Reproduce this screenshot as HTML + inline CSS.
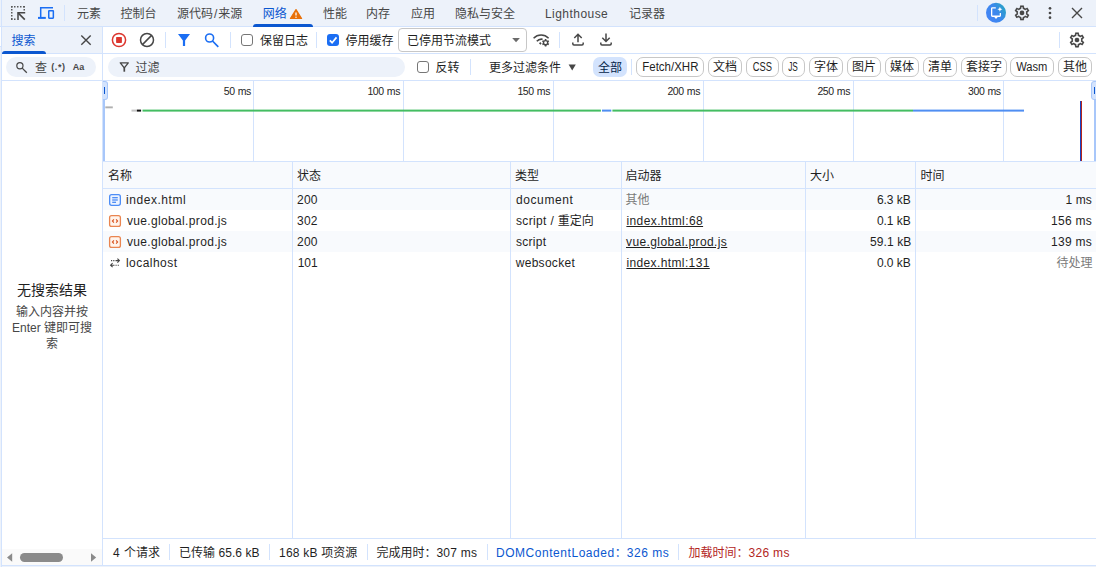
<!DOCTYPE html>
<html lang="zh-CN">
<head>
<meta charset="utf-8">
<title>DevTools - 网络</title>
<style>
html,body{margin:0;padding:0;}
body{width:1096px;height:567px;overflow:hidden;background:#fff;position:relative;
 font-family:"Liberation Sans","Noto Sans CJK SC",sans-serif;font-size:12px;color:#1f1f1f;line-height:16px;}
.a{position:absolute;}
.t{position:absolute;white-space:nowrap;line-height:16px;font-size:12px;margin-top:1px;}
.rw{margin-top:0;}
.hl{position:absolute;height:1px;background:#d3e3fd;}
.vl{position:absolute;width:1px;background:#d3e3fd;}
.bar{position:absolute;background:#edf2fa;}
.pill{position:absolute;top:57px;height:18px;border:1px solid #c7c7c7;border-radius:7px;text-align:center;line-height:18px;font-size:12px;color:#1f1f1f;white-space:nowrap;}
.cb{position:absolute;width:10px;height:10px;border:1px solid #767676;border-radius:3px;background:#fff;}
svg{position:absolute;overflow:visible;}
</style>
</head>
<body>
<!-- top tab bar -->
<div class="bar" style="left:0;top:0;width:1096px;height:26px;"></div>
<div class="hl" style="left:0;top:26px;width:1096px;"></div>
<div class="a" style="left:253px;top:24px;width:60px;height:3px;background:#0b57d0;border-radius:3px 3px 0 0;"></div>
<div class="vl" style="left:64px;top:5px;height:16px;"></div>
<div class="vl" style="left:977px;top:5px;height:16px;"></div>
<!-- left search panel -->
<div class="bar" style="left:0;top:27px;width:102px;height:26px;"></div>
<div class="hl" style="left:0;top:53px;width:1096px;"></div>
<div class="hl" style="left:0;top:80px;width:1096px;"></div>
<div class="a" style="left:2px;top:51px;width:44px;height:3px;background:#0b57d0;border-radius:3px 3px 0 0;"></div>
<div class="a" style="left:6px;top:57px;width:90px;height:20px;border-radius:10px;background:#edf2fa;"></div>
<div class="t" style="left:2px;top:280px;width:100px;text-align:center;font-size:14px;line-height:18px;">无搜索结果</div>
<div class="t" style="left:8px;top:303px;width:88px;text-align:center;white-space:normal;color:#474747;">输入内容并按 Enter 键即可搜索</div>
<div class="a" style="left:2px;top:549px;width:100px;height:16px;background:#fafafa;"></div>
<div class="a" style="left:20px;top:553px;width:43px;height:9px;border-radius:4.5px;background:#8b8b8b;"></div>
<!-- toolbar -->
<div class="vl" style="left:165px;top:32px;height:16px;"></div>
<div class="vl" style="left:230px;top:32px;height:16px;"></div>
<div class="vl" style="left:316px;top:32px;height:16px;"></div>
<div class="vl" style="left:559px;top:32px;height:16px;"></div>
<div class="vl" style="left:1059px;top:32px;height:16px;"></div>
<div class="cb" style="left:241px;top:34px;"></div>
<div class="a" style="left:327px;top:34px;width:12px;height:12px;border-radius:3px;background:#1b6ef3;"></div>
<div class="a" style="left:398px;top:28px;width:127px;height:22px;border:1px solid #c7c7c7;border-radius:4px;background:#fff;"></div>
<!-- filter bar -->
<div class="a" style="left:108px;top:57px;width:297px;height:20px;border-radius:10px;background:#edf2fa;"></div>
<div class="cb" style="left:417px;top:61px;"></div>
<div class="vl" style="left:470px;top:59px;height:16px;"></div>
<div class="a" style="left:593px;top:57px;width:34px;height:20px;border-radius:7px;background:#d3e3fd;"></div>
<div class="t" style="left:598px;top:59px;width:24px;text-align:center;color:#041e49;">全部</div>
<div class="vl" style="left:631px;top:59px;height:16px;"></div>
<div class="pill" style="left:636px;width:66px;"><span style="display:inline-block;transform:scaleX(0.957);transform-origin:50% 50%;margin:0 -10px;">Fetch/XHR</span></div>
<div class="pill" style="left:708px;width:32px;">文档</div>
<div class="pill" style="left:746px;width:31px;"><span style="display:inline-block;transform:scaleX(0.78);transform-origin:50% 50%;margin:0 -10px;">CSS</span></div>
<div class="pill" style="left:782px;width:21px;"><span style="display:inline-block;transform:scaleX(0.69);transform-origin:50% 50%;margin:0 -10px;">JS</span></div>
<div class="pill" style="left:809px;width:32px;">字体</div>
<div class="pill" style="left:847px;width:32px;">图片</div>
<div class="pill" style="left:885px;width:32px;">媒体</div>
<div class="pill" style="left:923px;width:32px;">清单</div>
<div class="pill" style="left:961px;width:44px;">套接字</div>
<div class="pill" style="left:1010px;width:42px;"><span style="display:inline-block;transform:scaleX(0.93);transform-origin:50% 50%;margin:0 -10px;">Wasm</span></div>
<div class="pill" style="left:1058px;width:32px;">其他</div>
<!-- overview -->
<div class="vl" style="left:253px;top:81px;height:80px;"></div>
<div class="vl" style="left:403px;top:81px;height:80px;"></div>
<div class="vl" style="left:553px;top:81px;height:80px;"></div>
<div class="vl" style="left:703px;top:81px;height:80px;"></div>
<div class="vl" style="left:853px;top:81px;height:80px;"></div>
<div class="vl" style="left:1003px;top:81px;height:80px;"></div>
<div class="a" style="left:1080px;top:101px;width:1px;height:60px;background:#1a44c2;"></div>
<div class="a" style="left:1081px;top:101px;width:1px;height:60px;background:#b3261e;"></div>
<div class="a" style="left:103px;top:81px;width:2px;height:80px;background:#a8c7fa;"></div>
<div class="a" style="left:103px;top:81px;width:4px;height:18px;background:#d3e3fd;border:1px solid #a8c7fa;border-left:0;border-radius:0 3px 3px 0;box-sizing:border-box;width:5px;height:19px;"></div>
<div class="a" style="left:104px;top:87px;width:1px;height:7px;background:#0b57d0;"></div>
<div class="a" style="left:1094px;top:81px;width:2px;height:80px;background:#a8c7fa;"></div>
<div class="a" style="left:1091px;top:81px;width:8px;height:19px;background:#d3e3fd;border:1px solid #a8c7fa;border-radius:3px;box-sizing:border-box;"></div>
<div class="a" style="left:1094px;top:87px;width:1px;height:7px;background:#0b57d0;"></div>
<!-- table -->
<div class="a" style="left:103px;top:162px;width:993px;height:26px;background:#f8fafd;"></div>
<div class="hl" style="left:103px;top:161px;width:993px;"></div>
<div class="hl" style="left:103px;top:188px;width:993px;"></div>
<div class="a" style="left:103px;top:189px;width:993px;height:21px;background:#f8fafd;"></div>
<div class="a" style="left:103px;top:231px;width:993px;height:21px;background:#f8fafd;"></div>
<div class="vl" style="left:292px;top:162px;height:376px;"></div>
<div class="vl" style="left:510px;top:162px;height:376px;"></div>
<div class="vl" style="left:621px;top:162px;height:376px;"></div>
<div class="vl" style="left:805px;top:162px;height:376px;"></div>
<div class="vl" style="left:915px;top:162px;height:376px;"></div>
<!-- status bar -->
<div class="hl" style="left:103px;top:538px;width:993px;"></div>
<div class="hl" style="left:0;top:565px;width:1096px;"></div>
<div class="vl" style="left:169px;top:544px;height:16px;"></div>
<div class="vl" style="left:269px;top:544px;height:16px;"></div>
<div class="vl" style="left:367px;top:544px;height:16px;"></div>
<div class="vl" style="left:487px;top:544px;height:16px;"></div>
<div class="vl" style="left:678px;top:544px;height:16px;"></div>
<div class="bar" style="left:0;top:0;width:1px;height:567px;"></div>
<div class="bar" style="left:0;top:566px;width:1096px;height:1px;"></div>
<div class="a" style="left:0;top:26px;width:1px;height:19px;background:#fff;border-top:1px solid #d3e3fd;border-bottom:1px solid #d3e3fd;"></div>
<div class="vl" style="left:1px;top:0;height:567px;"></div>
<div class="vl" style="left:102px;top:27px;height:539px;"></div>
<!-- text -->
<div id="tab1" class="t" style="left:77.00px;top:5px;color:#474747;">元素</div>
<div id="tab2" class="t" style="left:120.50px;top:5px;color:#474747;">控制台</div>
<div id="tab3" class="t" style="left:177.00px;top:5px;color:#474747;">源代码<span style="margin:0 0.9px">/</span>来源</div>
<div id="tab4" class="t" style="left:262.70px;top:5px;color:#0b57d0;">网络</div>
<div id="tab5" class="t" style="left:323.00px;top:5px;color:#474747;">性能</div>
<div id="tab6" class="t" style="left:366.00px;top:5px;color:#474747;">内存</div>
<div id="tab7" class="t" style="left:411.00px;top:5px;color:#474747;">应用</div>
<div id="tab8" class="t" style="left:455.00px;top:5px;color:#474747;">隐私与安全</div>
<div id="tab9" class="t" style="left:545.00px;top:5px;color:#474747;"><span style="letter-spacing:0.45px">Lighthouse</span></div>
<div id="tab10" class="t" style="left:629.00px;top:5px;color:#474747;">记录器</div>
<div id="srch" class="t" style="left:11.60px;top:32px;color:#0b57d0;">搜索</div>
<div id="cha" class="t" style="left:35.00px;top:59px;color:#474747;">查</div>
<div id="re" class="t" style="left:51.20px;top:58px;color:#474747;font-size:9px;font-weight:bold;"><span style="letter-spacing:0.60px">(.*)</span></div>
<div id="aa" class="t" style="left:72.80px;top:58px;color:#474747;font-size:9px;font-weight:bold;">Aa</div>
<div id="pl" class="t" style="left:260.00px;top:32px;">保留日志</div>
<div id="dc" class="t" style="left:345.40px;top:32px;">停用缓存</div>
<div id="thr" class="t" style="left:407.00px;top:32px;">已停用节流模式</div>
<div id="flt" class="t" style="left:135.60px;top:59px;color:#474747;">过滤</div>
<div id="inv" class="t" style="left:435.40px;top:59px;">反转</div>
<div id="more" class="t" style="left:489.00px;top:59px;">更多过滤条件</div>
<div id="ov0" class="t" style="left:223.70px;top:82px;font-size:10.5px;word-spacing:0.6px;"><span style="letter-spacing:-0.40px">50 ms</span></div>
<div id="ov1" class="t" style="left:367.40px;top:82px;font-size:10.5px;word-spacing:0.6px;"><span style="letter-spacing:-0.40px">100 ms</span></div>
<div id="ov2" class="t" style="left:517.40px;top:82px;font-size:10.5px;word-spacing:0.6px;"><span style="letter-spacing:-0.40px">150 ms</span></div>
<div id="ov3" class="t" style="left:667.40px;top:82px;font-size:10.5px;word-spacing:0.6px;"><span style="letter-spacing:-0.40px">200 ms</span></div>
<div id="ov4" class="t" style="left:817.40px;top:82px;font-size:10.5px;word-spacing:0.6px;"><span style="letter-spacing:-0.40px">250 ms</span></div>
<div id="ov5" class="t" style="left:968.00px;top:82px;font-size:10.5px;word-spacing:0.6px;"><span style="letter-spacing:-0.40px">300 ms</span></div>
<div id="h1" class="t" style="left:108.00px;top:167px;">名称</div>
<div id="h2" class="t" style="left:297.00px;top:167px;">状态</div>
<div id="h3" class="t" style="left:515.00px;top:167px;">类型</div>
<div id="h4" class="t" style="left:625.40px;top:167px;">启动器</div>
<div id="h5" class="t" style="left:810.00px;top:167px;">大小</div>
<div id="h6" class="t" style="left:920.40px;top:167px;">时间</div>
<div id="n1" class="t rw" style="left:126.00px;top:192px;"><span style="letter-spacing:0.55px">index.html</span></div>
<div id="n2" class="t rw" style="left:127.00px;top:213px;"><span style="letter-spacing:0.34px">vue.global.prod.js</span></div>
<div id="n3" class="t rw" style="left:127.00px;top:234px;"><span style="letter-spacing:0.34px">vue.global.prod.js</span></div>
<div id="n4" class="t rw" style="left:126.00px;top:255px;"><span style="letter-spacing:0.45px">localhost</span></div>
<div id="s1" class="t rw" style="left:297.00px;top:192px;"><span style="letter-spacing:0.23px">200</span></div>
<div id="s2" class="t rw" style="left:297.00px;top:213px;"><span style="letter-spacing:0.23px">302</span></div>
<div id="s3" class="t rw" style="left:297.00px;top:234px;"><span style="letter-spacing:0.23px">200</span></div>
<div id="s4" class="t rw" style="left:297.70px;top:255px;">101</div>
<div id="ty1" class="t rw" style="left:516.00px;top:192px;"><span style="letter-spacing:0.59px">document</span></div>
<div id="ty2" class="t rw" style="left:516.00px;top:213px;"><span style="letter-spacing:0.35px">script / </span>重定向</div>
<div id="ty3" class="t rw" style="left:516.00px;top:234px;"><span style="letter-spacing:0.29px">script</span></div>
<div id="ty4" class="t rw" style="left:515.70px;top:255px;"><span style="letter-spacing:0.30px">websocket</span></div>
<div id="i1" class="t rw" style="left:625.40px;top:192px;color:#7a7a7a;">其他</div>
<div id="i2" class="t rw" style="left:626.40px;top:213px;text-decoration:underline;"><span style="letter-spacing:0.41px">index.html:68</span></div>
<div id="i3" class="t rw" style="left:626.00px;top:234px;text-decoration:underline;"><span style="letter-spacing:0.40px">vue.global.prod.js</span></div>
<div id="i4" class="t rw" style="left:626.40px;top:255px;text-decoration:underline;"><span style="letter-spacing:0.38px">index.html:131</span></div>
<div id="z1" class="t rw" style="left:877.00px;top:192px;"><span style="letter-spacing:-0.07px">6.3 kB</span></div>
<div id="z2" class="t rw" style="left:877.00px;top:213px;"><span style="letter-spacing:-0.07px">0.1 kB</span></div>
<div id="z3" class="t rw" style="left:870.00px;top:234px;"><span style="letter-spacing:0.09px">59.1 kB</span></div>
<div id="z4" class="t rw" style="left:877.00px;top:255px;"><span style="letter-spacing:-0.07px">0.0 kB</span></div>
<div id="m1" class="t rw" style="left:1065.40px;top:192px;"><span style="letter-spacing:0.12px">1 ms</span></div>
<div id="m2" class="t rw" style="left:1051.00px;top:213px;"><span style="letter-spacing:0.27px">156 ms</span></div>
<div id="m3" class="t rw" style="left:1051.00px;top:234px;"><span style="letter-spacing:0.27px">139 ms</span></div>
<div id="m4" class="t rw" style="left:1056.40px;top:255px;color:#7a7a7a;">待处理</div>
<div id="st1" class="t" style="left:113.00px;top:544px;"><span style="letter-spacing:0.45px">4 </span>个请求</div>
<div id="st2" class="t" style="left:179.00px;top:544px;">已传输<span style="letter-spacing:0.06px"> 65.6 kB</span></div>
<div id="st3" class="t" style="left:279.00px;top:544px;"><span style="letter-spacing:0.23px">168 kB </span>项资源</div>
<div id="st4" class="t" style="left:376.40px;top:544px;">完成用时：<span style="letter-spacing:0.25px">307 ms</span></div>
<div id="st5" class="t" style="left:496.00px;top:544px;color:#0b57d0;"><span style="letter-spacing:0.54px">DOMContentLoaded</span>：<span style="letter-spacing:0.54px">326 ms</span></div>
<div id="st6" class="t" style="left:688.40px;top:544px;color:#b3261e;">加载时间：<span style="letter-spacing:0.34px">326 ms</span></div>
<!-- icon overlay -->
<svg style="left:0;top:0;pointer-events:none;" width="1096" height="567" viewBox="0 0 1096 567" fill="none">
<defs><linearGradient id="aig" x1="0" y1="0.8" x2="1" y2="0.2"><stop offset="0.15" stop-color="#4285f4"/><stop offset="0.55" stop-color="#3b88ec"/><stop offset="1" stop-color="#26a5c2"/></linearGradient></defs>
<rect x="105.3" y="106.4" width="7.5" height="1.9" fill="#b0b0b0"/>
<rect x="131.5" y="109.6" width="5.4" height="2" fill="#c4c4c4"/>
<rect x="136.9" y="109.6" width="4.2" height="2" fill="#111"/>
<rect x="142.5" y="109.6" width="458.4" height="2" fill="#44bd62"/>
<rect x="612.4" y="109.6" width="300.6" height="2" fill="#44bd62"/>
<rect x="602" y="109.6" width="9.3" height="2" fill="#4f8ef2"/>
<rect x="913" y="109.6" width="111" height="2" fill="#4f8ef2"/>
<g stroke="#5a5a5a" stroke-width="1.5">
<path d="M11 6.75H25" stroke-dasharray="1.5 1.5"/>
<path d="M11.75 6V20" stroke-dasharray="1.5 1.5"/>
<path d="M24.25 6V11" stroke-dasharray="1.5 1.5"/>
<path d="M11 19.25H16" stroke-dasharray="1.5 1.5"/>
</g>
<g stroke="#474747" stroke-width="1.5"><path d="M18 20V12.8H25.2"/><path d="M18.3 13.1L24.8 19.6" stroke-width="1.6"/></g>
<g stroke="#1b6ef3" stroke-width="1.5"><path d="M53 7.7H40.7V17"/><rect x="48.75" y="10.85" width="4.6" height="7.3" rx="0.4"/></g>
<rect x="38" y="16.9" width="7.8" height="2" fill="#1b6ef3"/>
<circle cx="119" cy="40" r="6.6" stroke="#dc362e" stroke-width="1.5"/>
<rect x="116.1" y="37.1" width="5.8" height="5.8" rx="0.6" fill="#dc362e"/>
<circle cx="147" cy="40" r="6.5" stroke="#474747" stroke-width="1.5"/>
<path d="M142.4 44.6L151.6 35.4" stroke="#474747" stroke-width="1.5"/>
<path d="M178 34H190L185.1 40.4V46H182.9V40.4Z" fill="#1b6ef3"/>
<circle cx="209.6" cy="38" r="4" stroke="#1b6ef3" stroke-width="1.6"/>
<path d="M212.5 41L218.3 46.8" stroke="#1b6ef3" stroke-width="1.7"/>
<path d="M329.8 40.3L332.1 42.7L336.5 37.4" stroke="#fff" stroke-width="1.7"/>
<path d="M512.2 38H519.9L516.05 42.3Z" fill="#6a6a6a"/>
<path d="M568.6 64.4H575.8L572.2 70.6Z" fill="#474747"/>
<g stroke="#474747" stroke-width="1.5">
<path d="M533.6 38.2A10.5 10.5 0 0 1 548.6 38.2"/>
<path d="M536.8 41.3A6.2 6.2 0 0 1 542.6 39.2" stroke-width="1.6"/>
<path d="M541 44.2L539.6 42.7" stroke-width="1.7"/>
<circle cx="545.6" cy="42.7" r="2.1" stroke-width="1.4"/>
<path d="M545.6 39V40.4M545.6 45V46.4M542.4 40.85L543.6 41.55M547.6 43.85L548.8 44.55M542.4 44.55L543.6 43.85M547.6 41.55L548.8 40.85" stroke-width="1.6"/>
</g>
<g stroke="#474747" stroke-width="1.5" stroke-linejoin="round">
<path d="M578 42.3V34.6M574.3 38L578 34.3L581.7 38" stroke-linejoin="miter"/>
<path d="M572.8 42.4V43.8Q572.8 45 574 45H582Q583.2 45 583.2 43.8V42.4"/>
<path d="M606 33.4V41.2M602.3 37.8L606 41.5L609.7 37.8" stroke-linejoin="miter"/>
<path d="M600.8 42.4V43.8Q600.8 45 602 45H610Q611.2 45 611.2 43.8V42.4"/>
</g>
<circle cx="996" cy="12.8" r="10" fill="url(#aig)"/>
<path d="M995.8 7.85H992.3Q991.65 7.85 991.65 8.5V15.6Q991.65 16.25 992.3 16.25H999.7Q1000.35 16.25 1000.35 15.6V13" stroke="#fff" stroke-width="1.3"/>
<path d="M994 16.8H998L996 18.9Z" fill="#fff"/>
<path d="M999.9 6.7L1000.6 8.5L1002.4 9.2L1000.6 9.9L999.9 11.7L999.2 9.9L997.4 9.2L999.2 8.5Z" fill="#fff"/>
<g transform="translate(1013.12,4.02) scale(0.74)" fill="#474747" stroke="#474747" stroke-width="0.15"><path d="M19.43 12.98c.04-.32.07-.64.07-.98 0-.34-.03-.66-.07-.98l2.11-1.65c.19-.15.24-.42.12-.64l-2-3.46c-.09-.16-.26-.25-.44-.25-.06 0-.12.01-.17.03l-2.49 1c-.52-.4-1.08-.73-1.69-.98l-.38-2.65C14.46 2.18 14.25 2 14 2h-4c-.25 0-.46.18-.49.42l-.38 2.65c-.61.25-1.17.59-1.69.98l-2.49-1c-.06-.02-.12-.03-.18-.03-.17 0-.34.09-.43.25l-2 3.46c-.13.22-.07.49.12.64l2.11 1.65c-.04.32-.07.65-.07.98 0 .33.03.66.07.98l-2.11 1.65c-.19.15-.24.42-.12.64l2 3.46c.09.16.26.25.44.25.06 0 .12-.01.17-.03l2.49-1c.52.4 1.08.73 1.69.98l.38 2.65c.03.24.24.42.49.42h4c.25 0 .46-.18.49-.42l.38-2.65c.61-.25 1.17-.59 1.69-.98l2.49 1c.06.02.12.03.18.03.17 0 .34-.09.43-.25l2-3.46c.12-.22.07-.49-.12-.64l-2.11-1.65zm-1.98-1.71c.04.31.05.52.05.73 0 .21-.02.43-.05.73l-.14 1.13.89.7 1.08.84-.7 1.21-1.27-.51-1.04-.42-.9.68c-.43.32-.84.56-1.25.73l-1.06.43-.16 1.13-.2 1.35h-1.4l-.19-1.35-.16-1.13-1.06-.43c-.43-.18-.83-.41-1.23-.71l-.91-.7-1.06.43-1.27.51-.7-1.21 1.08-.84.89-.7-.14-1.13c-.03-.31-.05-.54-.05-.74s.02-.43.05-.73l.14-1.13-.89-.7-1.08-.84.7-1.21 1.27.51 1.04.42.9-.68c.43-.32.84-.56 1.25-.73l1.06-.43.16-1.13.2-1.35h1.39l.19 1.35.16 1.13 1.06.43c.43.18.83.41 1.23.71l.91.7 1.06-.43 1.27-.51.7 1.21-1.07.85-.89.7.14 1.13z"/><circle cx="12" cy="12" r="3.1"/></g>
<g transform="translate(1068.12,31.12) scale(0.74)" fill="#474747" stroke="#474747" stroke-width="0.15"><path d="M19.43 12.98c.04-.32.07-.64.07-.98 0-.34-.03-.66-.07-.98l2.11-1.65c.19-.15.24-.42.12-.64l-2-3.46c-.09-.16-.26-.25-.44-.25-.06 0-.12.01-.17.03l-2.49 1c-.52-.4-1.08-.73-1.69-.98l-.38-2.65C14.46 2.18 14.25 2 14 2h-4c-.25 0-.46.18-.49.42l-.38 2.65c-.61.25-1.17.59-1.69.98l-2.49-1c-.06-.02-.12-.03-.18-.03-.17 0-.34.09-.43.25l-2 3.46c-.13.22-.07.49.12.64l2.11 1.65c-.04.32-.07.65-.07.98 0 .33.03.66.07.98l-2.11 1.65c-.19.15-.24.42-.12.64l2 3.46c.09.16.26.25.44.25.06 0 .12-.01.17-.03l2.49-1c.52.4 1.08.73 1.69.98l.38 2.65c.03.24.24.42.49.42h4c.25 0 .46-.18.49-.42l.38-2.65c.61-.25 1.17-.59 1.69-.98l2.49 1c.06.02.12.03.18.03.17 0 .34-.09.43-.25l2-3.46c.12-.22.07-.49-.12-.64l-2.11-1.65zm-1.98-1.71c.04.31.05.52.05.73 0 .21-.02.43-.05.73l-.14 1.13.89.7 1.08.84-.7 1.21-1.27-.51-1.04-.42-.9.68c-.43.32-.84.56-1.25.73l-1.06.43-.16 1.13-.2 1.35h-1.4l-.19-1.35-.16-1.13-1.06-.43c-.43-.18-.83-.41-1.23-.71l-.91-.7-1.06.43-1.27.51-.7-1.21 1.08-.84.89-.7-.14-1.13c-.03-.31-.05-.54-.05-.74s.02-.43.05-.73l.14-1.13-.89-.7-1.08-.84.7-1.21 1.27.51 1.04.42.9-.68c.43-.32.84-.56 1.25-.73l1.06-.43.16-1.13.2-1.35h1.39l.19 1.35.16 1.13 1.06.43c.43.18.83.41 1.23.71l.91.7 1.06-.43 1.27-.51.7 1.21-1.07.85-.89.7.14 1.13z"/><circle cx="12" cy="12" r="3.1"/></g>
<g fill="#474747"><circle cx="1050" cy="8.3" r="1.35"/><circle cx="1050" cy="13" r="1.35"/><circle cx="1050" cy="17.7" r="1.35"/></g>
<path d="M1072 8L1082 18M1082 8L1072 18" stroke="#474747" stroke-width="1.4"/>
<path d="M81.3 35.4L90.7 44.8M90.7 35.4L81.3 44.8" stroke="#474747" stroke-width="1.4"/>
<path d="M296 9.6L301.6 18.5H290.4Z" fill="#e8710a" stroke="#e8710a" stroke-width="1.2" stroke-linejoin="round"/>
<path d="M296 12.4V15.6" stroke="#fff" stroke-width="1.3"/><circle cx="296" cy="17.3" r="0.75" fill="#fff"/>
<circle cx="19.9" cy="65.8" r="3.1" stroke="#474747" stroke-width="1.2"/>
<path d="M22.2 68.1L26.8 72.7" stroke="#474747" stroke-width="1.3"/>
<path d="M120.3 62.8H128.3L124.3 67.8Z" stroke="#474747" stroke-width="1.35" stroke-linejoin="round"/><path d="M124.3 67.4V71.7" stroke="#474747" stroke-width="1.7"/>
<path d="M12.2 553.2V561.8L7 557.5Z" fill="#8b8b8b"/>
<path d="M91 553.2V561.8L96.2 557.5Z" fill="#8b8b8b"/>
<rect x="109.65" y="194.65" width="10.7" height="10.7" rx="2" fill="#eef4ff" stroke="#4c8df6" stroke-width="1.3"/>
<path d="M112.2 197.7H117.8M112.2 200H117.8M112.2 202.3H116" stroke="#1b6ef3" stroke-width="1.05"/>
<rect x="109.6" y="215.6" width="10.8" height="10.8" rx="2" fill="#fff4ec" stroke="#e98550" stroke-width="1.3"/>
<path d="M113.9 219.4L112.4 221L113.9 222.6M116.1 219.4L117.6 221L116.1 222.6" stroke="#d9531e" stroke-width="1.1"/>
<rect x="109.6" y="236.6" width="10.8" height="10.8" rx="2" fill="#fff4ec" stroke="#e98550" stroke-width="1.3"/>
<path d="M113.9 240.4L112.4 242L113.9 243.6M116.1 240.4L117.6 242L116.1 243.6" stroke="#d9531e" stroke-width="1.1"/>
<g stroke="#474747" stroke-width="1.1">
<path d="M115.5 260.6H119.4M117.4 258.6L119.4 260.6L117.4 262.6"/><path d="M111 260.6H114.5" stroke-dasharray="1.2 1"/>
<path d="M114.5 265.2H110.6M112.6 263.2L110.6 265.2L112.6 267.2"/><path d="M115.5 265.2H119" stroke-dasharray="1.2 1"/>
</g>
</svg>
</body>
</html>
